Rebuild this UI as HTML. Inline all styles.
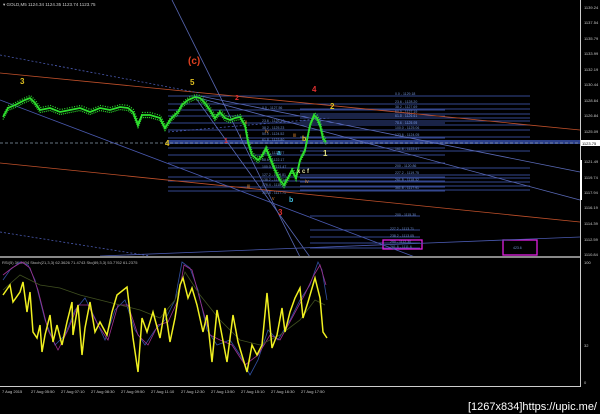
<!DOCTYPE html>
<html><head><meta charset="utf-8"><style>
html,body{margin:0;padding:0;background:#000;width:600px;height:414px;overflow:hidden}
svg{display:block}
text{font-family:"Liberation Sans",sans-serif}
</style></head><body>
<svg width="600" height="414" viewBox="0 0 600 414" xmlns="http://www.w3.org/2000/svg">
<rect width="600" height="414" fill="#000"/>
<text x="3" y="6" font-size="4.5" fill="#ccc">▾ GOLD,M5  1124.34 1124.35 1123.74 1123.75</text>
<g stroke="#34478f" stroke-width="1">
<line x1="168" y1="96" x2="445" y2="96"/><line x1="168" y1="104" x2="445" y2="104"/>
<line x1="168" y1="110" x2="445" y2="110"/><line x1="168" y1="116" x2="445" y2="116"/>
<line x1="168" y1="123" x2="445" y2="123"/><line x1="168" y1="130" x2="445" y2="130"/>
<line x1="168" y1="138" x2="445" y2="138"/><line x1="168" y1="148" x2="445" y2="148"/>
<line x1="168" y1="155" x2="445" y2="155"/><line x1="168" y1="163" x2="445" y2="163"/>
<line x1="168" y1="168" x2="445" y2="168"/><line x1="168" y1="177" x2="445" y2="177"/>
<line x1="168" y1="181" x2="445" y2="181"/><line x1="168" y1="187" x2="445" y2="187"/>
<line x1="168" y1="191" x2="445" y2="191"/>
<line x1="300" y1="96" x2="530" y2="96"/><line x1="300" y1="104" x2="530" y2="104"/>
<line x1="300" y1="109" x2="530" y2="109"/><line x1="300" y1="114" x2="530" y2="114"/>
<line x1="300" y1="118" x2="530" y2="118"/><line x1="300" y1="121" x2="530" y2="121"/>
<line x1="300" y1="125" x2="530" y2="125"/><line x1="300" y1="130" x2="530" y2="130"/>
<line x1="300" y1="137" x2="530" y2="137"/><line x1="300" y1="151" x2="530" y2="151"/>
<line x1="300" y1="168" x2="530" y2="168"/><line x1="300" y1="175" x2="530" y2="175"/>
<line x1="300" y1="178" x2="530" y2="178"/><line x1="300" y1="182" x2="530" y2="182"/>
<line x1="300" y1="186" x2="530" y2="186"/><line x1="300" y1="190" x2="530" y2="190"/>
<line x1="310" y1="216" x2="420" y2="216"/><line x1="310" y1="230" x2="420" y2="230"/>
<line x1="310" y1="237" x2="420" y2="237"/><line x1="310" y1="243" x2="420" y2="243"/>
<line x1="310" y1="248" x2="420" y2="248"/>
</g>
<rect x="168" y="140" width="412" height="4" fill="#2b3f8a"/>
<line x1="0" y1="143" x2="580" y2="143" stroke="#8899aa" stroke-width="0.7" stroke-dasharray="3,2"/>
<g font-size="3.5" fill="#6f8fd0">
<text x="395" y="95">0.0 - 1129.18</text><text x="395" y="103">23.6 - 1128.20</text>
<text x="395" y="108">38.2 - 1127.69</text><text x="395" y="113">50.0 - 1127.19</text>
<text x="395" y="117">61.8 - 1126.61</text><text x="395" y="124">78.6 - 1125.95</text>
<text x="395" y="129">100.0 - 1125.06</text><text x="395" y="136">123.6 - 1124.05</text>
<text x="395" y="150">161.8 - 1122.47</text><text x="395" y="167">200 - 1120.86</text>
<text x="395" y="174">227.2 - 1119.75</text><text x="395" y="181">261.8 - 1118.32</text>
<text x="395" y="189">361.8 - 1117.91</text>
<text x="262" y="109">0.0 - 1127.56</text><text x="262" y="122">23.6 - 1126.10</text>
<text x="262" y="129">38.2 - 1125.23</text><text x="262" y="135">50.0 - 1124.52</text>
<text x="262" y="141">61.8 - 1123.80</text><text x="262" y="154">78.6 - 1122.77</text>
<text x="262" y="161">88.6 - 1122.17</text><text x="262" y="168">100.0 - 1121.47</text>
<text x="262" y="176">127.2 - 1119.81</text><text x="262" y="181">138.2 - 1119.14</text>
<text x="262" y="186">176.4 - 1118.24</text><text x="262" y="194">361.8 - 1117.71</text>
<text x="395" y="216">200 - 1115.30</text><text x="390" y="230">227.2 - 1113.71</text>
<text x="390" y="237">238.2 - 1113.05</text><text x="390" y="243">250 - 1112.30</text>
<text x="390" y="248">261.8 - 1111.6</text><text x="513" y="249">423.6</text>
</g>
<rect x="383" y="240" width="39" height="9" fill="none" stroke="#e020e0" stroke-width="1.3"/>
<rect x="503" y="240" width="34" height="15" fill="none" stroke="#e020e0" stroke-width="1.3"/>
<g fill="none" stroke-width="0.8">
<line x1="0" y1="73" x2="580" y2="130" stroke="#c0502a"/>
<line x1="0" y1="163" x2="580" y2="222" stroke="#c0502a"/>
<line x1="0" y1="100" x2="415" y2="257" stroke="#4a5ab0"/>
<line x1="172" y1="0" x2="300" y2="257" stroke="#5a6ab8"/>
<line x1="195" y1="97" x2="310" y2="257" stroke="#5a6ab8"/>
<line x1="195" y1="97" x2="580" y2="200" stroke="#5a6ab8"/>
<line x1="200" y1="96" x2="580" y2="172" stroke="#5a6ab8"/>
<line x1="100" y1="256" x2="580" y2="237" stroke="#4a5ab0"/>
<line x1="0" y1="55" x2="200" y2="93" stroke="#4a5ab0" stroke-dasharray="2,2"/>
<line x1="0" y1="232" x2="150" y2="256" stroke="#4a5ab0" stroke-dasharray="2,2"/>
<line x1="168" y1="132" x2="330" y2="118" stroke="#4a5ab0" stroke-dasharray="2,2"/>
</g>
<g fill="none">
<polyline stroke="#2ee02e" stroke-width="1.2" stroke-dasharray="1,1" transform="translate(0,2.5)" points="3,117 8,108 15,105 25,100 30,98 35,103 40,110 50,108 60,112 70,110 80,108 90,112 100,108 110,110 120,107 128,108 133,112 138,125 142,115 150,115 160,118 165,128 170,120 178,112 182,105 188,100 195,97 200,98 205,103 210,110 215,118 220,112 225,118 230,120 235,118 240,117 245,125 248,142 252,155 258,160 262,156 266,148 270,158 275,170 280,180 284,185 288,178 292,170 296,178 300,160 305,150 310,125 314,115 317,118 320,125 323,138 326,142"/>
<polyline stroke="#2ee02e" stroke-width="1.2" stroke-dasharray="1,1.5" transform="translate(0.5,-2.5)" points="3,117 8,108 15,105 25,100 30,98 35,103 40,110 50,108 60,112 70,110 80,108 90,112 100,108 110,110 120,107 128,108 133,112 138,125 142,115 150,115 160,118 165,128 170,120 178,112 182,105 188,100 195,97 200,98 205,103 210,110 215,118 220,112 225,118 230,120 235,118 240,117 245,125 248,142 252,155 258,160 262,156 266,148 270,158 275,170 280,180 284,185 288,178 292,170 296,178 300,160 305,150 310,125 314,115 317,118 320,125 323,138 326,142"/>
<polyline stroke="#2ee02e" stroke-width="1.8" points="3,117 8,108 15,105 25,100 30,98 35,103 40,110 50,108 60,112 70,110 80,108 90,112 100,108 110,110 120,107 128,108 133,112 138,125 142,115 150,115 160,118 165,128 170,120 178,112 182,105 188,100 195,97 200,98 205,103 210,110 215,118 220,112 225,118 230,120 235,118 240,117 245,125 248,142 252,155 258,160 262,156 266,148 270,158 275,170 280,180 284,185 288,178 292,170 296,178 300,160 305,150 310,125 314,115 317,118 320,125 323,138 326,142"/>
</g>
<g font-family="Liberation Serif" font-weight="bold">
<text x="188" y="64" font-size="10" fill="#e04020">(c)</text>
<text x="190" y="85" font-size="8" fill="#e0c020">5</text>
<text x="20" y="84" font-size="8" fill="#e0c020">3</text>
<text x="165" y="146" font-size="8" fill="#e0c020">4</text>
<text x="312" y="92" font-size="8" fill="#e03030">4</text>
<text x="330" y="109" font-size="8" fill="#e0c020">2</text>
<text x="323" y="156" font-size="8" fill="#e0e080">1</text>
<text x="278" y="215" font-size="8" fill="#e03030">3</text>
<text x="224" y="143" font-size="7" fill="#e03030">1</text>
<text x="235" y="100" font-size="7" fill="#e03030">2</text>
<text x="277" y="155" font-size="7" fill="#40c0e0">a</text>
<text x="289" y="202" font-size="7" fill="#40c0e0">b</text>
<text x="302" y="141" font-size="7" fill="#e0c020">b</text>
<text x="297" y="173" font-size="6" fill="#e0e0a0">x c f</text>
</g>
<g font-size="5" fill="#d08030"><text x="245" y="124">ii</text><text x="240" y="138">i</text><text x="265" y="133">iv</text><text x="247" y="188">iii</text><text x="293" y="137">iii</text><text x="305" y="183">iv</text><text x="272" y="200">v</text></g>
<rect x="0" y="256" width="580" height="2" fill="#888"/>
<text x="2" y="264" font-size="4" fill="#bbb">RSI(5) 36.0404  Stoch(21,3,3) 62.3626 71.4743  Sto(89,3,3) 53.7762 61.2375</text>
<polyline fill="none" stroke="#3050a0" stroke-width="0.8" points="3,280 10,270 20,262 28,265 35,280 45,320 55,345 65,335 75,310 85,298 95,318 105,340 115,310 125,300 135,330 145,345 155,330 165,320 175,300 182,262 190,268 198,290 207,330 217,345 230,340 240,355 250,375 258,360 268,330 278,340 290,320 300,300 310,285 318,262 322,270 327,300"/>
<polyline fill="none" stroke="#a03090" stroke-width="0.8" points="3,275 12,268 22,262 30,268 38,290 48,330 58,350 68,330 78,305 88,305 98,325 108,340 118,305 128,305 138,335 148,345 158,325 168,322 178,300 184,265 192,270 200,300 210,335 220,340 232,345 245,365 258,355 270,335 280,340 292,318 304,296 314,275 320,265 326,285"/>
<polyline fill="none" stroke="#405020" stroke-width="0.8" points="3,290 20,275 40,285 60,288 80,295 100,300 120,305 140,310 160,318 175,300 185,272 200,295 220,320 240,340 260,345 280,335 300,320 315,300 325,305"/>
<polyline fill="none" stroke="#f0f020" stroke-width="1.5" points="3,295 10,285 13,302 20,292 23,282 27,312 30,292 33,332 37,338 40,325 42,352 45,335 50,315 53,342 57,325 62,345 67,322 72,302 73,335 78,305 82,355 85,328 90,302 95,332 100,322 107,335 112,312 117,295 127,287 130,312 133,338 138,372 142,318 147,332 153,312 160,338 165,308 170,342 175,318 180,285 183,278 188,298 192,288 197,305 203,332 207,315 212,362 217,310 220,325 227,362 233,315 238,342 247,372 252,345 257,355 262,345 267,293 272,348 277,335 282,308 285,332 290,312 295,298 300,288 303,318 308,302 315,278 320,298 323,332 327,338"/>
<line x1="580.5" y1="0" x2="580.5" y2="386" stroke="#ccc" stroke-width="1"/>
<line x1="0" y1="386.5" x2="581" y2="386.5" stroke="#ccc" stroke-width="1"/>
<rect x="580" y="160" width="2" height="40" fill="#fff"/>
<g font-size="4" fill="#ccc">
<text x="584" y="9">1139.24</text><text x="584" y="24">1137.54</text><text x="584" y="40">1135.79</text>
<text x="584" y="55">1133.99</text><text x="584" y="71">1132.19</text><text x="584" y="86">1130.44</text>
<text x="584" y="102">1128.64</text><text x="584" y="117">1126.84</text><text x="584" y="133">1125.09</text>
<text x="584" y="163">1121.49</text><text x="584" y="179">1119.74</text><text x="584" y="194">1117.94</text>
<text x="584" y="209">1116.19</text><text x="584" y="225">1114.39</text><text x="584" y="241">1112.59</text>
<text x="584" y="256">1110.84</text><text x="584" y="264">100</text><text x="584" y="347">32</text><text x="584" y="384">0</text>
</g>
<rect x="581" y="140" width="19" height="6" fill="#fff"/>
<text x="582" y="145" font-size="4" fill="#000">1123.75</text>
<g font-size="4" fill="#ccc">
<text x="2" y="393">7 Aug 2015</text><text x="31" y="393">27 Aug 05:50</text><text x="61" y="393">27 Aug 07:10</text>
<text x="91" y="393">27 Aug 08:30</text><text x="121" y="393">27 Aug 09:50</text><text x="151" y="393">27 Aug 11:10</text>
<text x="181" y="393">27 Aug 12:30</text><text x="211" y="393">27 Aug 13:50</text><text x="241" y="393">27 Aug 15:10</text>
<text x="271" y="393">27 Aug 16:30</text><text x="301" y="393">27 Aug 17:50</text>
</g>
<text x="597" y="410" font-size="11" fill="#fff" text-anchor="end" font-family="Liberation Mono">[1267x834]https://upic.me/</text>
</svg>
</body></html>
